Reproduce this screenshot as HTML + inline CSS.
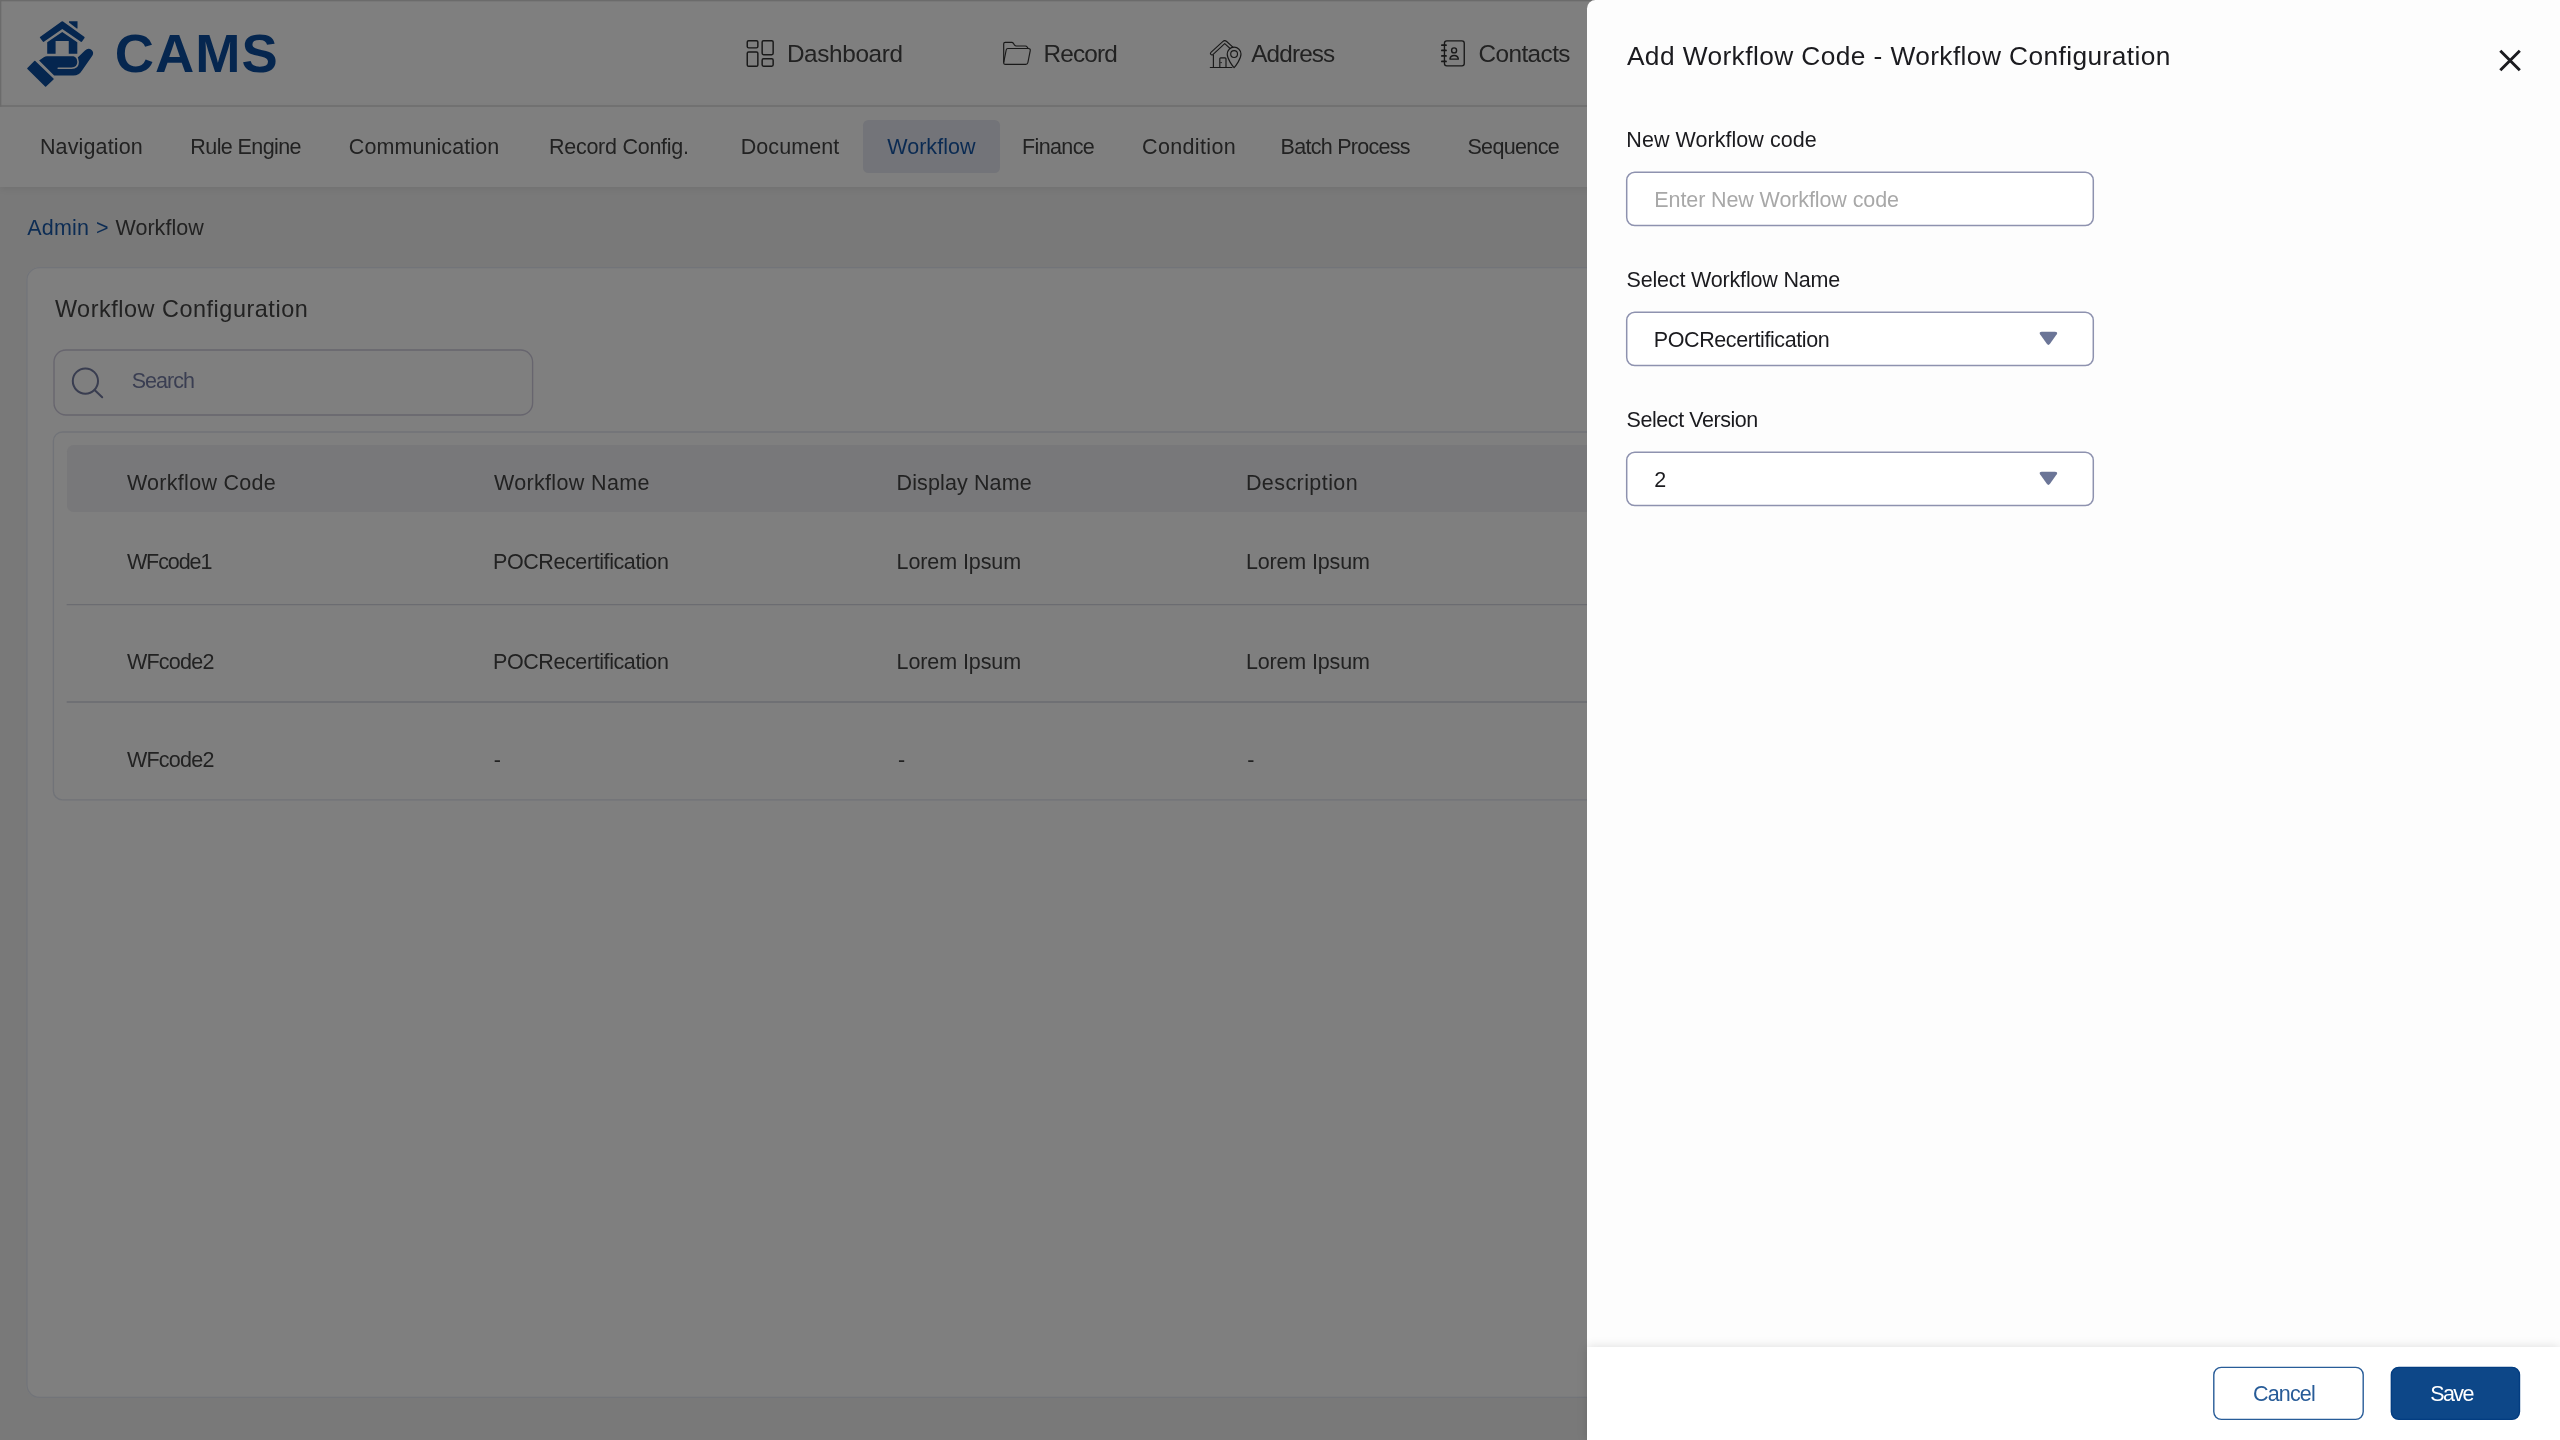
<!DOCTYPE html>
<html lang="en">
<head>
<meta charset="utf-8">
<title>CAMS - Workflow Configuration</title>
<style>
html,body{margin:0;padding:0;}
body{width:2560px;height:1440px;overflow:hidden;position:relative;background:#797979;font-family:"Liberation Sans",Arial,sans-serif;}
*{box-sizing:border-box;}
.t{position:absolute;white-space:pre;margin:0;padding:0;font-weight:400;display:block;}
.abs{position:absolute;}
#header{left:0;top:0;width:2560px;height:106.67px;background:#7f7f7f;}
#subnav{left:0;top:106.67px;width:2560px;height:80px;background:#7f7f7f;box-shadow:0 2px 7px rgba(0,0,0,0.07);}
#pill{left:863px;top:120px;width:136.9px;height:53px;border-radius:5.5px;background:#737479;}
#card{left:26.2px;top:266.9px;width:2507px;height:1131.2px;background:#7f7f7f;border-radius:13px;}
#search{left:54px;top:350px;width:478.6px;height:65px;border-radius:12px;}
#tablewrap{left:53.4px;top:432px;width:2454px;height:367.9px;border-radius:9px;}
#thead{left:66.7px;top:445.4px;width:2427px;height:66.6px;background:#78787a;border-radius:6.5px;}
#panel{left:1586.7px;top:0;width:973.3px;height:1440px;background:#fdfdfd;border-top-left-radius:8.5px;overflow:visible;}
#footer{left:1586.7px;top:1346.6px;width:973.3px;height:93.4px;background:#ffffff;box-shadow:0 0 10px rgba(0,0,0,0.13);}
.field{left:1626.7px;width:466.7px;height:53.7px;border-radius:8px;background:#ffffff;}
#cancel{left:2213.8px;top:1367px;width:149.4px;height:52.4px;border-radius:7.5px;background:#ffffff;}
#save{left:2391px;top:1367px;width:129px;height:53px;border-radius:8px;}
svg{position:absolute;left:0;top:0;overflow:visible;}
#root{position:absolute;left:0;top:0;width:2560px;height:1440px;will-change:transform;}
</style>
</head>
<body>
<div id="root">

<header id="header" class="abs"></header>
<nav id="subnav" class="abs"></nav>
<div id="pill" class="abs"></div>
<svg width="2560" height="110" viewBox="0 0 2560 110"><g fill="#6b6b6b"><rect x="0" y="0" width="2560" height="1.33"/><rect x="0" y="0" width="1.33" height="106.67"/><rect x="0" y="105.33" width="2560" height="1.34"/></g></svg>
<svg width="2560" height="200" viewBox="0 0 2560 200" aria-label="CAMS logo">
<g fill="#05264f">
<path d="M40 36.9 L61.6 21.5 Q62.3 21 63 21.5 L84.2 36.7 Q84.9 37.3 84.5 38 L82 41.5 Q81.5 42.2 80.8 41.7 L62.3 28.9 L43.9 41.8 Q43.3 42.2 42.8 41.6 L40 37.8 Q39.6 37.3 40 36.9 Z"/>
<path d="M69 21.3 H77.5 V28.6 L76.7 28.4 L69 22.4 Z"/>
<path d="M47.2 53.75 V42.3 L62.25 32 L77.3 42.3 V53.75 H68.75 V40.9 H55.6 V53.75 Z"/>
<path d="M34.3 60.9 Q34.8 60.4 35.3 60.9 L53.5 78.6 Q54 79.1 53.5 79.6 L46.1 86.6 Q45.6 87.1 45.1 86.6 L27.4 69 Q26.9 68.5 27.4 68 Z"/>
<path d="M39.1 60.6 L43.8 57.3 Q45.3 56.25 47 56.25 L73.5 56.25 L77.2 57.9 L85 50.4 Q88.4 47.4 91.6 50 Q94.3 52.6 92.3 55.7 L82.2 70.3 Q79 75.6 73.4 75.6 L54.1 75.6 Z"/>
</g>
<path d="M58.2 68.25 L71.5 68.25 Q78.1 68.2 78.1 62 Q78.1 58.3 75.2 55.4" fill="none" stroke="#7f7f7f" stroke-width="1.6" stroke-linecap="round"/>
</svg>
<span class="t " style="left:114.73px;top:27px;font-size:54.3px;line-height:54.3px;color:#05264f;letter-spacing:1.077px;font-weight:700;">CAMS</span>
<svg width="2560" height="110" viewBox="0 0 2560 110">
<g fill="none" stroke="#191919" stroke-width="1.45">
<rect x="747.25" y="40.65" width="10.6" height="7.2" rx="1.4"/>
<rect x="747.25" y="51.9" width="10.6" height="14.4" rx="1.4"/>
<rect x="762.15" y="40.65" width="11" height="14" rx="1.4"/>
<rect x="762.15" y="58.75" width="11" height="7.5" rx="1.4"/>
</g>
<g fill="none" stroke="#191919" stroke-width="1.15" stroke-linejoin="round">
<path d="M1003.7 62.5 V43.8 Q1003.7 42.4 1005.2 42.4 H1011.8 Q1012.8 42.4 1013.4 43.4 L1014.6 45.2 Q1015.2 46 1016.3 46 H1025.3 Q1026.5 46 1027.2 47 L1028 48.4"/>
<path d="M1007.8 48.5 H1028.5 Q1030.6 48.6 1030.2 50.8 L1027.9 62.5 Q1027.5 64.3 1025.8 64.3 H1005.5 Q1003.5 64.3 1003.7 62.3 L1006.2 50 Q1006.5 48.5 1007.8 48.5 Z"/>
</g>
<g fill="none" stroke-linecap="round" stroke-linejoin="round">
<path d="M1211.9 53.5 L1223.7 42.6 Q1224.7 41.7 1225.7 42.6 L1233 49.2" stroke="#191919" stroke-width="4"/>
<path d="M1211.9 53.5 L1223.7 42.6 Q1224.7 41.7 1225.7 42.6 L1233 49.2" stroke="#7f7f7f" stroke-width="1.8"/>
<path d="M1213.4 55 V67.5 M1210.3 67.5 H1232" stroke="#191919" stroke-width="1.15"/>
<path d="M1219.8 67.5 V58.8 Q1219.8 57.8 1220.8 57.8 H1225 Q1226 57.8 1226 58.8 V67.5" stroke="#191919" stroke-width="1.15"/>
<path d="M1220.6 62.6 H1221.6" stroke="#191919" stroke-width="0.8"/>
<path d="M1227.2 54.1 A6.9 6.9 0 1 1 1241 54.1 C1241 59 1235.6 66 1234.1 67.6 C1232.6 66 1227.2 59 1227.2 54.1 Z" fill="#7f7f7f" stroke="#191919" stroke-width="1.15"/>
<circle cx="1234.1" cy="54.1" r="3.4" stroke="#191919" stroke-width="1.15"/>
</g>
<g fill="none" stroke="#191919" stroke-width="1.35" stroke-linecap="round">
<rect x="1444.45" y="40.9" width="19.8" height="25" rx="2.3"/>
<path d="M1441.9 45.2 H1446 M1441.9 50.4 H1446 M1441.9 55.9 H1446 M1441.9 61.4 H1446" stroke-width="1.8"/>
<circle cx="1454.1" cy="50.4" r="2.5"/>
<path d="M1449.9 59.1 A4.3 4.3 0 0 1 1458.4 59.1 Z" stroke-linejoin="round"/>
</g>
</svg>
<span class="t " style="left:786.90px;top:42px;font-size:24.3px;line-height:24.3px;color:#222222;letter-spacing:-0.338px;">Dashboard</span>
<span class="t " style="left:1043.60px;top:42px;font-size:24.3px;line-height:24.3px;color:#222222;letter-spacing:-0.817px;">Record</span>
<span class="t " style="left:1251.24px;top:42px;font-size:24.3px;line-height:24.3px;color:#222222;letter-spacing:-0.851px;">Address</span>
<span class="t " style="left:1478.49px;top:42px;font-size:24.3px;line-height:24.3px;color:#222222;letter-spacing:-0.551px;">Contacts</span>
<span class="t " style="left:39.93px;top:137px;font-size:21.5px;line-height:21.5px;color:#222222;letter-spacing:0.137px;">Navigation</span>
<span class="t " style="left:190.33px;top:137px;font-size:21.5px;line-height:21.5px;color:#222222;letter-spacing:-0.593px;">Rule Engine</span>
<span class="t " style="left:348.82px;top:137px;font-size:21.5px;line-height:21.5px;color:#222222;letter-spacing:0.079px;">Communication</span>
<span class="t " style="left:548.93px;top:137px;font-size:21.5px;line-height:21.5px;color:#222222;letter-spacing:-0.254px;">Record Config.</span>
<span class="t " style="left:740.73px;top:137px;font-size:21.5px;line-height:21.5px;color:#222222;letter-spacing:0.064px;">Document</span>
<span class="t " style="left:887.19px;top:137px;font-size:21.5px;line-height:21.5px;color:#0a2a52;letter-spacing:0.052px;">Workflow</span>
<span class="t " style="left:1022.03px;top:137px;font-size:21.5px;line-height:21.5px;color:#222222;letter-spacing:-0.633px;">Finance</span>
<span class="t " style="left:1142.02px;top:137px;font-size:21.5px;line-height:21.5px;color:#222222;letter-spacing:0.360px;">Condition</span>
<span class="t " style="left:1280.53px;top:137px;font-size:21.5px;line-height:21.5px;color:#222222;letter-spacing:-0.716px;">Batch Process</span>
<span class="t " style="left:1467.43px;top:137px;font-size:21.5px;line-height:21.5px;color:#222222;letter-spacing:-0.646px;">Sequence</span>
<span class="t " style="left:27.25px;top:218px;font-size:21.5px;line-height:21.5px;color:#0c2c54;letter-spacing:0.175px;">Admin</span>
<span class="t " style="left:95.88px;top:218px;font-size:21.5px;line-height:21.5px;color:#0c2c54;letter-spacing:0.000px;">&gt;</span>
<span class="t " style="left:115.49px;top:218px;font-size:21.5px;line-height:21.5px;color:#222222;letter-spacing:0.038px;">Workflow</span>
<main id="card" class="abs"></main>
<h2 class="t " style="left:54.88px;top:298px;font-size:23.4px;line-height:23.4px;color:#222222;letter-spacing:0.545px;">Workflow Configuration</h2>
<div id="search" class="abs"></div>
<svg width="600" height="500" viewBox="0 0 600 500">
<g fill="none" stroke="#393d50" stroke-width="2" stroke-linecap="round">
<circle cx="85.4" cy="381.05" r="12.6"/>
<path d="M94.6 390 L102.2 397.2"/>
</g></svg>
<span class="t " style="left:131.63px;top:371px;font-size:21.5px;line-height:21.5px;color:#3a3e52;letter-spacing:-0.978px;">Search</span>
<div id="tablewrap" class="abs"></div>
<div id="thead" class="abs"></div>
<svg width="2560" height="1440" viewBox="0 0 2560 1440" fill="none">
<rect x="26.9" y="267.67" width="2506" height="1129.7" rx="12.5" stroke="#727479" stroke-width="1.33"/>
<rect x="54" y="350" width="478.6" height="65" rx="12" stroke="#67656e" stroke-width="1.33"/>
<rect x="53.4" y="432" width="2454" height="367.9" rx="9" stroke="#717378" stroke-width="1.33"/>
<path d="M66.7 604.67 H2494 M66.7 702 H2494" stroke="#6b6c71" stroke-width="1.33"/>
</svg>
<span class="t " style="left:126.89px;top:473px;font-size:21.5px;line-height:21.5px;color:#222222;letter-spacing:0.298px;">Workflow Code</span>
<span class="t " style="left:493.89px;top:473px;font-size:21.5px;line-height:21.5px;color:#222222;letter-spacing:0.351px;">Workflow Name</span>
<span class="t " style="left:896.53px;top:473px;font-size:21.5px;line-height:21.5px;color:#222222;letter-spacing:0.119px;">Display Name</span>
<span class="t " style="left:1245.93px;top:473px;font-size:21.5px;line-height:21.5px;color:#222222;letter-spacing:0.422px;">Description</span>
<span class="t " style="left:126.89px;top:552px;font-size:21.5px;line-height:21.5px;color:#222222;letter-spacing:-1.073px;">WFcode1</span>
<span class="t " style="left:492.98px;top:552px;font-size:21.5px;line-height:21.5px;color:#222222;letter-spacing:-0.408px;">POCRecertification</span>
<span class="t " style="left:896.53px;top:552px;font-size:21.5px;line-height:21.5px;color:#222222;letter-spacing:-0.083px;">Lorem Ipsum</span>
<span class="t " style="left:1245.93px;top:552px;font-size:21.5px;line-height:21.5px;color:#222222;letter-spacing:-0.148px;">Lorem Ipsum</span>
<span class="t " style="left:126.89px;top:652px;font-size:21.5px;line-height:21.5px;color:#222222;letter-spacing:-0.740px;">WFcode2</span>
<span class="t " style="left:492.98px;top:652px;font-size:21.5px;line-height:21.5px;color:#222222;letter-spacing:-0.408px;">POCRecertification</span>
<span class="t " style="left:896.53px;top:652px;font-size:21.5px;line-height:21.5px;color:#222222;letter-spacing:-0.083px;">Lorem Ipsum</span>
<span class="t " style="left:1245.93px;top:652px;font-size:21.5px;line-height:21.5px;color:#222222;letter-spacing:-0.148px;">Lorem Ipsum</span>
<span class="t " style="left:126.89px;top:750px;font-size:21.5px;line-height:21.5px;color:#222222;letter-spacing:-0.740px;">WFcode2</span>
<span class="t " style="left:493.73px;top:750px;font-size:21.5px;line-height:21.5px;color:#222222;letter-spacing:0.000px;">-</span>
<span class="t " style="left:897.93px;top:750px;font-size:21.5px;line-height:21.5px;color:#222222;letter-spacing:0.000px;">-</span>
<span class="t " style="left:1247.33px;top:750px;font-size:21.5px;line-height:21.5px;color:#222222;letter-spacing:0.000px;">-</span>
<aside id="panel" class="abs"></aside>
<h1 class="t " style="left:1626.93px;top:43px;font-size:26.3px;line-height:26.3px;color:#1b1b1f;letter-spacing:0.409px;">Add Workflow Code - Workflow Configuration</h1>
<svg width="2560" height="120" viewBox="0 0 2560 120">
<path d="M2500.3 50.7 L2519.8 70.2 M2519.8 50.7 L2500.3 70.2" stroke="#1b1b1f" stroke-width="2.9" fill="none"/>
</svg>
<label class="t " style="left:1626.33px;top:130px;font-size:21.5px;line-height:21.5px;color:#1b1b1f;letter-spacing:0.051px;">New Workflow code</label>
<div class="abs field" style="top:172px"></div>
<span class="t " style="left:1654.33px;top:190px;font-size:21.5px;line-height:21.5px;color:#a8a8a8;letter-spacing:-0.106px;">Enter New Workflow code</span>
<label class="t " style="left:1626.53px;top:270px;font-size:21.5px;line-height:21.5px;color:#1b1b1f;letter-spacing:-0.172px;">Select Workflow Name</label>
<div class="abs field" style="top:312px"></div>
<span class="t " style="left:1653.83px;top:330px;font-size:21.5px;line-height:21.5px;color:#1b1b1f;letter-spacing:-0.411px;">POCRecertification</span>
<label class="t " style="left:1626.53px;top:410px;font-size:21.5px;line-height:21.5px;color:#1b1b1f;letter-spacing:-0.433px;">Select Version</label>
<div class="abs field" style="top:452px"></div>
<span class="t " style="left:1654.22px;top:470px;font-size:21.5px;line-height:21.5px;color:#1b1b1f;letter-spacing:0.000px;">2</span>
<svg width="2560" height="600" viewBox="0 0 2560 600"><path d="M2041.90 331.80 H2054.90 Q2058.20 331.80 2056.75 334.30 L2050.00 343.85 Q2048.40 346.00 2046.80 343.85 L2040.05 334.30 Q2038.60 331.80 2041.90 331.80 Z" fill="#6b7597"/><path d="M2041.90 471.80 H2054.90 Q2058.20 471.80 2056.75 474.30 L2050.00 483.85 Q2048.40 486.00 2046.80 483.85 L2040.05 474.30 Q2038.60 471.80 2041.90 471.80 Z" fill="#6b7597"/></svg>
<footer id="footer" class="abs"></footer>
<div id="cancel" class="abs"></div>
<div id="save" class="abs"></div>
<svg width="2560" height="1440" viewBox="0 0 2560 1440" fill="none">
<g stroke="#8e92af" stroke-width="1.5">
<rect x="1626.7" y="172.3" width="466.6" height="53.3" rx="8"/>
<rect x="1626.7" y="312.3" width="466.6" height="53.3" rx="8"/>
<rect x="1626.7" y="452.3" width="466.6" height="53.3" rx="8"/>
</g>
<rect x="2213.8" y="1367.35" width="149.4" height="52" rx="7.5" stroke="#285c98" stroke-width="1.4"/>
<rect x="2391.35" y="1367.35" width="128.15" height="52" rx="7.5" fill="#0d4788" stroke="#033d81" stroke-width="1.4"/>
</svg>
<span class="t " style="left:2253.03px;top:1384px;font-size:21.5px;line-height:21.5px;color:#285c98;letter-spacing:-0.838px;">Cancel</span>
<span class="t " style="left:2430.28px;top:1384px;font-size:21.5px;line-height:21.5px;color:#ffffff;letter-spacing:-1.645px;">Save</span>
</div>
</body></html>
